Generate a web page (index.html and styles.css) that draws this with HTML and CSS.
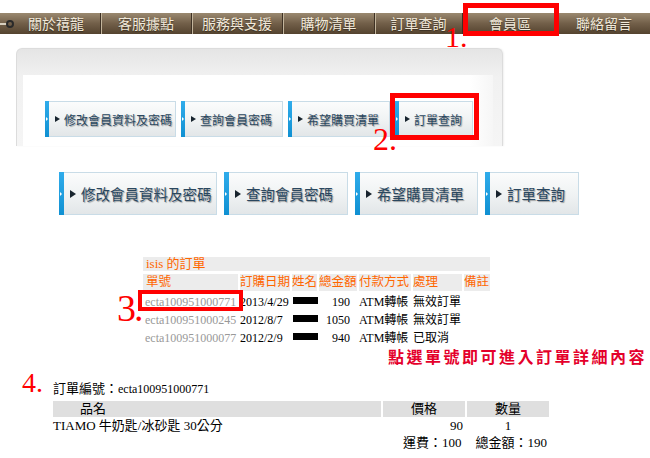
FILE: index.html
```html
<!DOCTYPE html>
<html>
<head>
	<meta charset="utf-8">
	<title>會員區</title>
	<link rel="stylesheet" href="styles.css">
</head>
<body>
	<div class="nav">
		<div class="nav-item n1"><svg class="nav-icon" width="14" height="10" viewBox="0 0 14 10"><line x1="0" y1="5" x2="8" y2="5" stroke="#d8d0c0" stroke-width="2"/><circle cx="10" cy="5" r="3" fill="none" stroke="#2a2a2a" stroke-width="2"/></svg>關於禧龍</div>
		<div class="nav-item n2">客服據點</div>
		<div class="nav-item n3">服務與支援</div>
		<div class="nav-item n4">購物清單</div>
		<div class="nav-item n5">訂單查詢</div>
		<div class="nav-item n6">會員區</div>
		<div class="nav-item n7">聯絡留言</div>
	</div>

	<div class="panel">
		<div class="panel-in">
			<div class="row small">
				<div class="btn s1"><span class="arrow"></span>修改會員資料及密碼</div>
				<div class="btn s2"><span class="arrow"></span>查詢會員密碼</div>
				<div class="btn s3"><span class="arrow"></span>希望購買清單</div>
				<div class="btn s4"><span class="arrow"></span>訂單查詢</div>
			</div>
		</div>
	</div>

	<div class="row big">
		<div class="btn b1"><span class="arrow"></span>修改會員資料及密碼</div>
		<div class="btn b2"><span class="arrow"></span>查詢會員密碼</div>
		<div class="btn b3"><span class="arrow"></span>希望購買清單</div>
		<div class="btn b4"><span class="arrow"></span>訂單查詢</div>
	</div>

	<div class="orders">
		<div class="o-title">isis 的訂單</div>
		<div class="o-grid o-head">
			<span class="pl">單號</span>
			<span>訂購日期</span>
			<span>姓名</span>
			<span>總金額</span>
			<span>付款方式</span>
			<span>處理</span>
			<span>備註</span>
		</div>
		<div class="o-grid o-row">
			<span class="oid">ecta100951000771</span>
			<span>2013/4/29</span>
			<span><i class="mask"></i></span>
			<span class="amt">190</span>
			<span>ATM轉帳</span>
			<span>無效訂單</span>
			<span></span>
		</div>
		<div class="o-grid o-row">
			<span class="oid">ecta100951000245</span>
			<span>2012/8/7</span>
			<span><i class="mask"></i></span>
			<span class="amt">1050</span>
			<span>ATM轉帳</span>
			<span>無效訂單</span>
			<span></span>
		</div>
		<div class="o-grid o-row">
			<span class="oid">ecta100951000077</span>
			<span>2012/2/9</span>
			<span><i class="mask"></i></span>
			<span class="amt">940</span>
			<span>ATM轉帳</span>
			<span>已取消</span>
			<span></span>
		</div>
	</div>

	<div class="note">點選單號即可進入訂單詳細內容</div>

	<div class="detail">
		<div class="d-no">訂單編號：<span class="num">ecta100951000771</span></div>
		<div class="p-grid p-head">
			<span class="pname">品名</span>
			<span>價格</span>
			<span>數量</span>
		</div>
		<div class="p-grid p-row">
			<span>TIAMO 牛奶匙/冰砂匙 30公分</span>
			<span class="price">90</span>
			<span class="qty">1</span>
		</div>
		<div class="p-total"><span>運費：100</span><span class="sum">總金額：190</span></div>
	</div>

	<div class="mark box1"></div>
	<div class="mark box2"></div>
	<div class="mark box3"></div>
	<div class="num-tag t1">1.</div>
	<div class="num-tag t2">2.</div>
	<div class="num-tag t3">3.</div>
	<div class="num-tag t4">4.</div>
</body>
</html>
```

FILE: styles.css
```css
*{
	padding: 0;
	margin: 0;
}
body{
	width: 650px;
	height: 458px;
	overflow: hidden;
	position: relative;
	background: #fff;
	color: #000;
	font-family: "Liberation Serif", "Noto Sans CJK TC", serif;
}

/* top nav */
.nav{
	margin-top: 13px;
	height: 21px;
	display: flex;
	background: linear-gradient(#9a8970, #725f49 50%, #54432f);
}
.nav-item{
	height: 21px;
	line-height: 21px;
	box-sizing: border-box;
	text-align: center;
	font-family: "Noto Sans CJK TC", sans-serif;
	font-size: 14px;
	color: #f1e9da;
	text-shadow: 0 1px 1px rgba(0,0,0,0.4);
	border-right: 1px solid #3e3124;
	box-shadow: inset 1px 0 0 #c3b59c;
}
.n1{ width: 101px; text-align: left; box-shadow: none; }
.n2{ width: 91px; }
.n3{ width: 91px; }
.n4{ width: 92px; }
.n5{ width: 88px; }
.n6{ width: 95px; }
.n7{ width: 92px; border-right: 0; }
.nav-icon{
	display: inline-block;
	vertical-align: middle;
	margin: -2px 14px 0 0;
}

/* member panel */
.panel{
	margin: 14px 0 0 16px;
	width: 487px;
	height: 98px;
	box-sizing: border-box;
	border: 1px solid #dcdcdc;
	border-bottom: 0;
	border-radius: 6px 6px 0 0;
	background: linear-gradient(#e5e5e5, #f1f1f1 28px, #f5f5f5);
	box-shadow: 1px 0 2px rgba(0,0,0,0.06);
	padding: 26px 9px 0 6px;
}
.panel-in{
	height: 71px;
	box-sizing: border-box;
	background: linear-gradient(90deg, #fff 95%, #f6f6f6);
	padding: 26px 0 0 22px;
}

/* buttons */
.row{
	display: flex;
}
.row.small{ gap: 5px; }
.row.big{
	gap: 7px;
	margin: 26px 0 0 59px;
}
.btn{
	display: flex;
	align-items: center;
	position: relative;
	box-sizing: border-box;
	border: 1px solid #c9dce7;
	border-left: 0;
	background: linear-gradient(#fbfcfc, #eff2f3 55%, #e2e6e8);
	color: #2a475f;
	text-shadow: 1px 1px 1px rgba(0,0,0,0.35);
	font-family: "Noto Sans CJK TC", sans-serif;
	white-space: nowrap;
}
.btn::before{
	content: "";
	align-self: stretch;
	margin: -1px 0;
	background: linear-gradient(#30aceb, #0f90d2);
}
.btn::after{
	content: "";
	position: absolute;
	left: 1px;
	top: 50%;
	margin-top: -2px;
	border-left: 2px solid #fff;
	border-top: 2px solid transparent;
	border-bottom: 2px solid transparent;
}
.arrow{
	display: block;
	width: 0;
	height: 0;
	border-left: 6px solid #18242e;
	border-top: 4px solid transparent;
	border-bottom: 4px solid transparent;
	margin: 0 5px 0 6px;
}
.small .btn{
	height: 36px;
	font-size: 12px;
}
.small .btn::before{ width: 4px; }
.small .arrow{
	border-left-width: 5px;
	border-top-width: 3.5px;
	border-bottom-width: 3.5px;
	margin: 0 4px 0 6px;
}
.s1{ width: 131px; }
.s2{ width: 102px; }
.s3{ width: 102px; }
.s4{ width: 78px; }
.big .btn{
	height: 43px;
	font-size: 14.5px;
}
.big .btn::before{ width: 5px; }
.b1{ width: 158px; }
.b2{ width: 124px; }
.b3{ width: 123px; }
.b4{ width: 94px; }

/* order list */
.orders{
	margin: 42px 0 0 143px;
	width: 347px;
	font-size: 12px;
}
.o-title{
	height: 14px;
	line-height: 14px;
	background: #ececec;
	color: #ff6600;
	font-size: 13px;
	padding-left: 3px;
}
.o-grid{
	display: grid;
	grid-template-columns: 95px 50px 25px 38px 52px 49px 26px;
	column-gap: 2px;
}
.o-head{
	margin: 3px 0 2px;
}
.o-head span{
	height: 17px;
	line-height: 17px;
	background: #ececec;
	color: #ff6600;
	font-size: 12.5px;
	white-space: nowrap;
	overflow: hidden;
}
.o-head .pl{ padding-left: 3px; }
.o-row span{
	height: 18px;
	line-height: 18px;
	white-space: nowrap;
}
.o-row .oid{
	color: #999;
	padding-left: 2px;
}
.o-row .amt{
	text-align: right;
	padding-right: 7px;
}
.mask{
	display: inline-block;
	width: 25px;
	height: 7px;
	background: #000;
	vertical-align: 2px;
	margin-left: 1px;
}

.note{
	margin: 1px 0 0 388px;
	height: 16px;
	line-height: 16px;
	font-family: "Noto Sans CJK TC", sans-serif;
	font-size: 16px;
	font-weight: bold;
	letter-spacing: 2.5px;
	color: #e4002b;
	white-space: nowrap;
}

/* order detail */
.detail{
	margin: 17px 0 0 53px;
	width: 496px;
	font-size: 13px;
}
.d-no{
	height: 16px;
	line-height: 16px;
	margin-bottom: 4px;
}
.d-no .num{ font-size: 12px; }
.p-grid{
	display: grid;
	grid-template-columns: 328px 82px 82px;
	column-gap: 2px;
}
.p-head span{
	height: 16px;
	line-height: 16px;
	background: #dfdfdf;
	text-align: center;
}
.p-head .pname{
	text-align: left;
	padding-left: 27px;
}
.p-row span{
	height: 17px;
	line-height: 17px;
	white-space: nowrap;
}
.p-row .price{
	text-align: right;
	padding-right: 2px;
}
.p-row .qty{ text-align: center; }
.p-total{
	height: 17px;
	line-height: 17px;
	text-align: right;
	padding-right: 2px;
}
.p-total .sum{ margin-left: 14px; }

/* red annotations */
.mark{
	position: absolute;
	box-sizing: border-box;
	border: 5px solid #ff0000;
}
.box1{ left: 463px; top: 3px; width: 96px; height: 33px; }
.box2{ left: 390px; top: 93px; width: 89px; height: 47px; }
.box3{ left: 138px; top: 290px; width: 105px; height: 21px; border-width: 4px; }
.num-tag{
	position: absolute;
	color: #ff0000;
	font-family: "Liberation Serif", serif;
	line-height: 1;
}
.t1{ left: 445px; top: 22px; font-size: 30px; }
.t2{ left: 373px; top: 123px; font-size: 32px; }
.t3{ left: 117px; top: 289px; font-size: 38px; letter-spacing: -2px; }
.t4{ left: 22px; top: 369px; font-size: 28px; }
```
